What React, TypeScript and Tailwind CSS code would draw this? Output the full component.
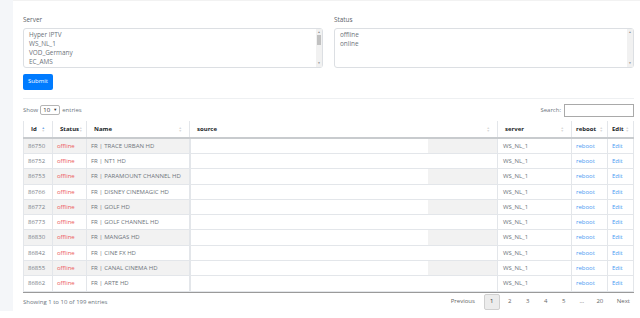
import React from "react";

const rows = [
  { id: "86750", name: "FR | TRACE URBAN HD" },
  { id: "86752", name: "FR | NT1 HD" },
  { id: "86753", name: "FR | PARAMOUNT CHANNEL HD" },
  { id: "86766", name: "FR | DISNEY CINEMAGIC HD" },
  { id: "86772", name: "FR | GOLF HD" },
  { id: "86773", name: "FR | GOLF CHANNEL HD" },
  { id: "86830", name: "FR | MANGAS HD" },
  { id: "86842", name: "FR | CINE FX HD" },
  { id: "86855", name: "FR | CANAL CINEMA HD" },
  { id: "86862", name: "FR | ARTE HD" },
];

function SortIcon({ active }: { active?: boolean }) {
  return (
    <span className="flex flex-col leading-none text-[3.5px] text-[#d9d9d9]">
      <span className={active ? "text-[#6ea8e8]" : ""}>▲</span>
      <span>▼</span>
    </span>
  );
}

function ListBox({ items, thumb }: { items: string[]; thumb?: boolean }) {
  return (
    <div className="flex h-[40px] rounded-[3px] border border-[#dcdfe3] bg-white">
      <div className="flex-1 px-[5px] pt-[1px] text-[6.4px] leading-[9px] text-[#6c737a]">
        {items.map((it) => (
          <div key={it}>{it}</div>
        ))}
      </div>
      <div className="flex w-[6px] flex-col items-center justify-between bg-[#f1f1f1] py-[1px] text-[3px] text-[#8a8a8a]">
        <span>▲</span>
        {thumb ? <div className="mb-auto mt-[1px] h-[10px] w-[4px] bg-[#c1c1c1]" /> : null}
        <span>▼</span>
      </div>
    </div>
  );
}

export default function App() {
  const th = "border-x border-[#e3e6ea] border-b-2 border-b-[#c8cbce] px-[7px] pt-[1px] text-left font-bold text-[#212529]";
  const td = "border border-[#e3e6ea] px-[4px] leading-[14.3px]";
  return (
    <div className="flex h-[318px] w-[640px] overflow-hidden bg-white font-['Open_Sans','Liberation_Sans',sans-serif] text-[6px]">
      <div className="h-[311px] w-[13px] shrink-0 bg-[#f4f6f9]" />
      <div className="flex-1 border-t border-[#f2f2f2] pl-[10px] pr-[6px]">
        <div className="mt-[14px] flex gap-[11px]">
          <div className="w-[300px]">
            <div className="mb-[3px] text-[6.4px] text-[#5a6169]">Server</div>
            <ListBox items={["Hyper IPTV", "WS_NL_1", "VOD_Germany", "EC_AMS"]} thumb />
          </div>
          <div className="flex-1">
            <div className="mb-[3px] text-[6.4px] text-[#5a6169]">Status</div>
            <ListBox items={["offline", "online"]} />
          </div>
        </div>
        <button className="mt-[6px] h-[16px] w-[30px] rounded-[2px] bg-[#007bff] text-[6px] text-white">Submit</button>
        <div className="mt-[8px] border-t border-[#eef0f2]" />
        <div className="mt-[5px] flex items-center justify-between text-[#6c757d]">
          <div className="flex items-center gap-[2px]">
            Show
            <span className="flex h-[10px] w-[20px] items-center justify-between rounded-[2px] border border-[#b5b5b5] px-[2px] text-[#333]">
              10<span className="text-[4px]">▼</span>
            </span>
            entries
          </div>
          <div className="flex items-center gap-[3px]">
            Search:
            <div className="h-[13px] w-[70px] border border-[#a9a9a9]" />
          </div>
        </div>
        <table className="mt-[4px] w-[611px] table-fixed border-collapse">
          <thead>
            <tr className="h-[17px]">
              <th className={th + " w-[29px]"}>
                <div className="flex items-center justify-between">Id<SortIcon active /></div>
              </th>
              <th className={th + " w-[34px]"}>
                <div className="flex items-center justify-between">Status<SortIcon /></div>
              </th>
              <th className={th + " w-[103px]"}>
                <div className="flex items-center justify-between">Name<SortIcon /></div>
              </th>
              <th className={th + " w-[308px]"}>
                <div className="flex items-center justify-between">source<SortIcon /></div>
              </th>
              <th className={th + " w-[74px]"}>
                <div className="flex items-center justify-between">server<SortIcon /></div>
              </th>
              <th className={th + " w-[36px] !px-[4px]"}>
                <div className="flex items-center justify-between">reboot<SortIcon /></div>
              </th>
              <th className={th + " !px-[4px]"}>
                <div className="flex items-center justify-between">Edit<SortIcon /></div>
              </th>
            </tr>
          </thead>
          <tbody>
            {rows.map((r, i) => (
              <tr key={r.id} className={i % 2 === 0 ? "bg-[#f2f2f2]" : "bg-white"}>
                <td className={td + " text-[#7a8188]"}>{r.id}</td>
                <td className={td + " text-[#ec5b5b]"}>offline</td>
                <td className={td + " whitespace-nowrap text-[#6e757c]"}>{r.name}</td>
                <td className="border-y border-[#e3e6ea] p-0">
                  <div className="h-[14.3px] w-[238px] border-l border-[#e3e6ea] bg-white" />
                </td>
                <td className={td + " bg-white px-[5px] text-[#6e757c]"}>WS_NL_1</td>
                <td className={td + " bg-white text-[#4a9af2]"}>reboot</td>
                <td className={td + " bg-white text-[#4a9af2]"}>Edit</td>
              </tr>
            ))}
          </tbody>
        </table>
        <div className="w-[611px] border-t border-[#9a9a9a]" />
        <div className="mt-[1px] flex w-[611px] items-center justify-between pr-[4px] text-[#6c757d]">
          <div className="mt-[2px]">Showing 1 to 10 of 199 entries</div>
          <div className="flex items-center text-[#666]">
            <span className="mr-[9px]">Previous</span>
            <span className="flex h-[16px] w-[16px] items-center justify-center rounded-[2px] border border-[#d0d0d0] bg-[#ececec] text-[#333]">1</span>
            <span className="ml-[1px] w-[18px] text-center">2</span>
            <span className="w-[18px] text-center">3</span>
            <span className="w-[18px] text-center">4</span>
            <span className="w-[18px] text-center">5</span>
            <span className="w-[18px] text-center">…</span>
            <span className="w-[18px] text-center">20</span>
            <span className="ml-[8px]">Next</span>
          </div>
        </div>
      </div>
    </div>
  );
}
